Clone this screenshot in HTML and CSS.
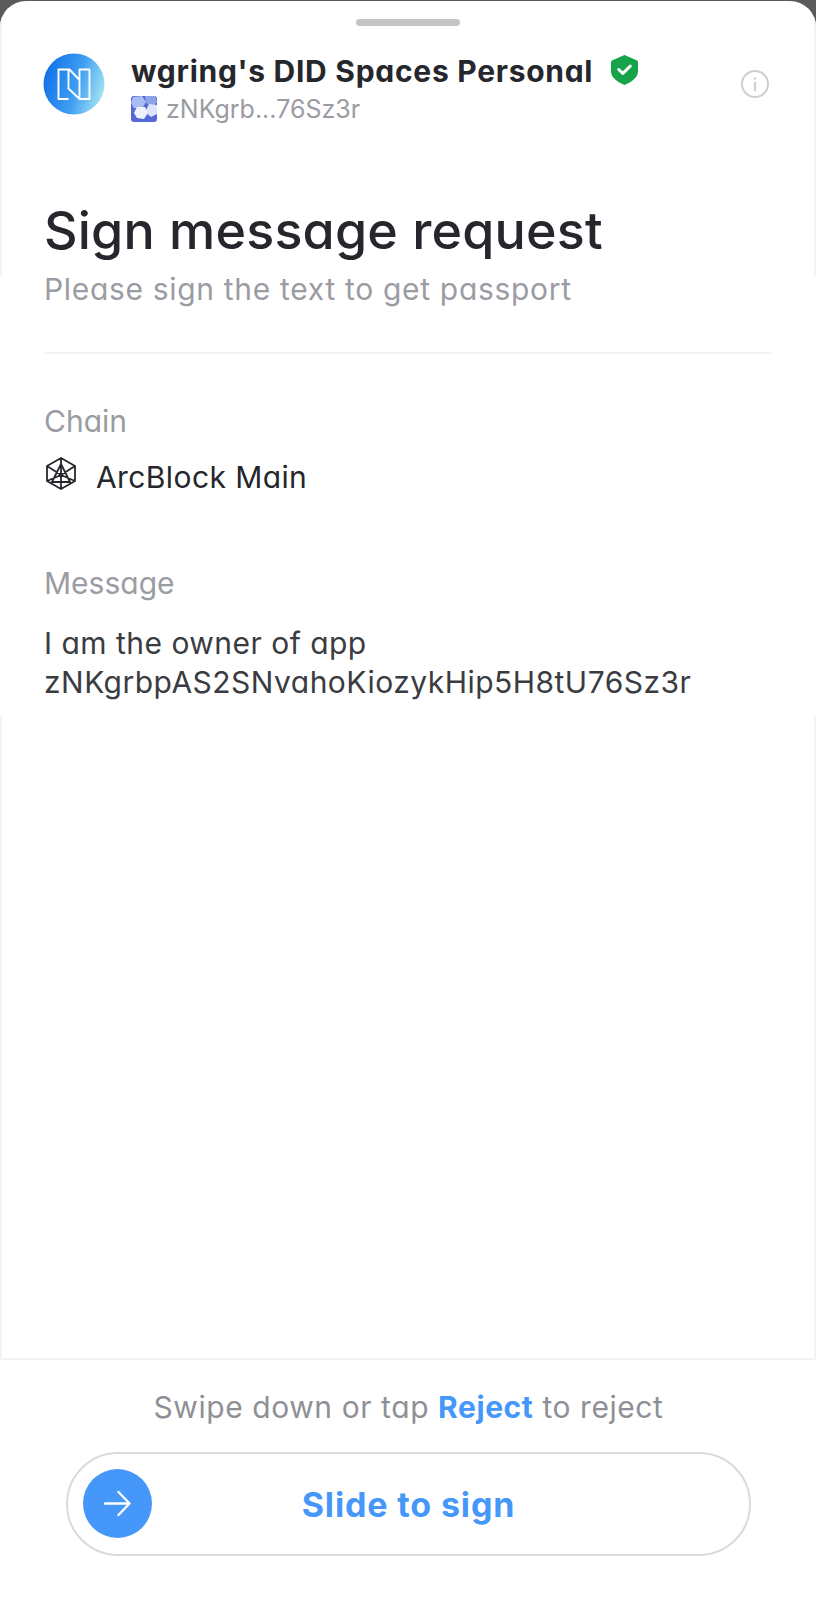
FILE: index.html
```html
<!DOCTYPE html>
<html lang="en">
<head>
<meta charset="UTF-8">
<meta name="viewport" content="width=device-width, initial-scale=1.0">
<title>Sign message request</title>
<link rel="stylesheet" href="styles.css">
</head>
<body>
<div class="sheet">
    <div class="top">
        <div class="handle"></div>
        <div class="app-row">
            <svg class="app-logo" viewBox="0 0 62 62" aria-hidden="true">
                <defs>
                    <linearGradient id="logoFill" x1="0" y1="0.35" x2="1" y2="0.65">
                        <stop offset="0" stop-color="#0f72e8"/>
                        <stop offset="0.55" stop-color="#3f9ef3"/>
                        <stop offset="1" stop-color="#a5e6f2"/>
                    </linearGradient>
                </defs>
                <circle cx="31" cy="31" r="30.500" fill="url(#logoFill)"/>
                <path d="M25.500 46H15.500V16.500H26.500L36.500 27V46L25.500 35.500V16.500M36.500 27V16.500H46.500V46H36.500" fill="none" stroke="#fff" stroke-width="1.900" stroke-linejoin="round"/>
            </svg>
            <div class="app-info">
                <div class="app-name">
                    <span>wgring's DID Spaces Personal</span>
                    <svg class="shield" viewBox="0 0 28 32" aria-hidden="true">
                        <path d="M14 1l12.500 5.500c.9.400 1.500 1.200 1.500 2.200V18c0 6-6.500 11-14 14C6.500 29 0 24 0 18V8.700c0-1 .6-1.800 1.500-2.200z" fill="#17a34a"/>
                        <path d="M8 16l4.300 4L20 12.500" fill="none" stroke="#fff" stroke-width="3" stroke-linecap="round" stroke-linejoin="round"/>
                    </svg>
                </div>
                <div class="app-did">
                    <svg class="did-icon" viewBox="0 0 26 26" aria-hidden="true">
                        <rect width="26" height="26" rx="3" fill="#5468d8"/>
                        <polygon points="2,1 11,0 15,6 11,13 3,12 0,7" fill="#a9bbf0"/>
                        <polygon points="14,0 24,0 26,6 22,11 15,7" fill="#8ea3ea"/>
                        <polygon points="18,8 26,9 26,18 20,21 14,16" fill="#dbe4fb"/>
                        <polygon points="6,11 14,11 17,17 13,23 6,22 3,17" fill="#eef2fd"/>
                    </svg>
                    <span>zNKgrb...76Sz3r</span>
                </div>
            </div>
            <svg class="info-icon" viewBox="0 0 28 28" aria-hidden="true">
                <circle cx="14" cy="14" r="13" fill="none" stroke="#cfcfd1" stroke-width="2"/>
                <circle cx="14" cy="8.500" r="1.300" fill="#cfcfd1"/>
                <path d="M14 12.500v8" stroke="#cfcfd1" stroke-width="2.200" stroke-linecap="round"/>
            </svg>
        </div>
        <h1>Sign message request</h1>
    </div>

    <div class="details">
        <p class="subtitle">Please sign the text to get passport</p>
        <div class="divider"></div>
        <div class="label">Chain</div>
        <div class="chain">
            <svg class="chain-icon" viewBox="0 0 30 33" aria-hidden="true">
                <path d="M15 1l14 8v15l-14 8-14-8V9z M1 9l14 9 14-9 M15 1v17 M15 32V18 M1 24l14-6 14 6 M15 7L6 25h18z" fill="none" stroke="#25272c" stroke-width="1.800" stroke-linejoin="round"/>
            </svg>
            <span>ArcBlock Main</span>
        </div>
        <div class="label label-message">Message</div>
        <p class="message">I am the owner of app<br>zNKgrbpAS2SNvahoKiozykHip5H8tU76Sz3r</p>
    </div>

    <div class="spacer"></div>

    <div class="footer">
        <p class="hint">Swipe down or tap <strong>Reject</strong> to reject</p>
        <div class="slider">
            <div class="knob">
                <svg viewBox="0 0 28 28" aria-hidden="true">
                    <path d="M1 14h25M15 2l11.500 12L15 26" fill="none" stroke="#fff" stroke-width="2.400" stroke-linecap="round" stroke-linejoin="round"/>
                </svg>
            </div>
            <span class="slider-text">Slide to sign</span>
        </div>
    </div>
</div>
</body>
</html>
```

FILE: styles.css
```css
html, body {
    height: 100%;
}
body {
    margin: 0;
    background-color: #5a5a5a;
    font-family: Inter, "Noto Sans", sans-serif;
    font-feature-settings: "cv11";
    color: #25272c;
}
.sheet {
    box-sizing: border-box;
    height: 1599px;
    margin-top: 1px;
    background-color: #fff;
    border-radius: 26px 26px 0 0;
    display: flex;
    flex-direction: column;
    overflow: hidden;
}
.top {
    height: 275px;
    box-sizing: border-box;
    border-left: 2px solid #f3f3f3;
    border-right: 2px solid #f3f3f3;
    padding: 18px 41px 0 41px;
}
.handle {
    width: 104px;
    height: 7px;
    margin: 0 auto;
    background-color: #c4c4c6;
    border-radius: 4px;
}
.app-row {
    display: flex;
    margin-top: 26px;
    margin-right: 4px;
}
.app-logo {
    width: 62px;
    height: 62px;
    flex-shrink: 0;
    margin-top: 1px;
}
.app-info {
    flex: 1;
    margin-left: 26px;
    margin-top: -3px;
}
.app-name {
    display: flex;
    align-items: center;
    font-size: 30px;
    font-weight: 700;
    letter-spacing: 0.72px;
    line-height: 44px;
}
.shield {
    width: 27px;
    height: 31px;
    margin-left: 18px;
    margin-top: -4px;
}
.app-did {
    display: flex;
    align-items: center;
    font-size: 25px;
    line-height: 34px;
    color: #9b9ca3;
    margin-top: -1px;
}
.did-icon {
    width: 26px;
    height: 26px;
    margin-right: 9px;
}
.info-icon {
    width: 28px;
    height: 28px;
    margin-top: 18px;
    flex-shrink: 0;
}
h1 {
    margin: 75px 0 0 1px;
    font-size: 52px;
    font-weight: 500;
    letter-spacing: 0.2px;
    line-height: 60px;
}
.details {
    height: 440px;
    box-sizing: border-box;
    padding: 0 44px;
}
.subtitle {
    margin: -2px 0 0 0;
    font-size: 30px;
    letter-spacing: 0.68px;
    line-height: 30px;
    color: #9b9ca3;
}
.divider {
    height: 2px;
    margin-top: 48px;
    background-color: #f3f3f3;
}
.label {
    margin-top: 50px;
    font-size: 30px;
    line-height: 34px;
    color: #9b9ca3;
}
.chain {
    display: flex;
    align-items: center;
    margin-top: 19px;
    font-size: 30px;
    letter-spacing: 0.4px;
    line-height: 40px;
}
.chain-icon {
    width: 30px;
    height: 33px;
    margin-left: 2px;
    margin-right: 20px;
    margin-top: -8px;
}
.label-message {
    margin-top: 69px;
}
.message {
    margin: 24px 0 0 0;
    font-size: 30px;
    letter-spacing: 0.48px;
    line-height: 39px;
    color: #3a3c42;
}
.spacer {
    flex: 1;
    border-left: 2px solid #f3f3f3;
    border-right: 2px solid #f3f3f3;
    border-bottom: 2px solid #f3f3f3;
}
.footer {
    height: 240px;
    box-sizing: border-box;
    padding: 27px 65px 0 66px;
}
.hint {
    margin: 0;
    text-align: center;
    font-size: 30px;
    letter-spacing: 0.57px;
    line-height: 40px;
    color: #8f9096;
}
.hint strong {
    color: #4598fa;
    font-weight: 700;
}
.slider {
    position: relative;
    box-sizing: border-box;
    height: 104px;
    margin-top: 25px;
    border: 2px solid #dadada;
    border-radius: 52px;
    display: flex;
    align-items: center;
    justify-content: center;
}
.knob {
    position: absolute;
    left: 15px;
    top: 15px;
    width: 69px;
    height: 69px;
    border-radius: 50%;
    background-color: #4598fa;
    display: flex;
    align-items: center;
    justify-content: center;
}
.knob svg {
    width: 27px;
    height: 27px;
}
.slider-text {
    font-size: 34px;
    font-weight: 700;
    letter-spacing: 0.86px;
    color: #4598fa;
}
```
